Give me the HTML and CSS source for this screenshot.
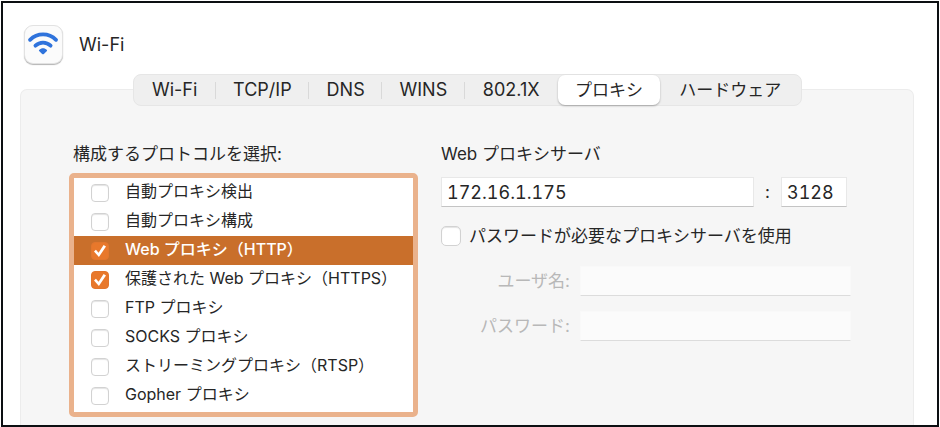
FILE: index.html
```html
<!DOCTYPE html>
<html lang="ja">
<head>
<meta charset="utf-8">
<meta name="viewport" content="width=device-width, initial-scale=1">
<title>Wi-Fi</title>
<link rel="stylesheet" href="styles.css">
</head>
<body>
<main class="window">
  <header class="header">
    <span class="app-icon">
      <svg viewBox="0 0 39 39" aria-hidden="true">
        <path class="arc" d="M5.3 14.6C13 7 25 7 32.7 14.6"/>
        <path class="arc" d="M11 20.7C15.6 16.4 22.4 16.4 27 20.7"/>
        <path class="dot" d="M14.9 25.2C17.3 22.9 20.7 22.9 23.1 25.2Q23.6 25.8 23.1 26.4L19.9 29.5Q19 30.3 18.1 29.5L14.9 26.4Q14.4 25.8 14.9 25.2Z"/>
      </svg>
    </span>
    <h1 class="title">Wi-Fi</h1>
  </header>

  <section class="panel">
    <nav class="tabs">
      <button class="tab tab-m" type="button">Wi-Fi</button>
      <button class="tab tab-l" type="button">TCP/IP</button>
      <button class="tab tab-s" type="button">DNS</button>
      <button class="tab tab-m" type="button">WINS</button>
      <button class="tab tab-l tab-last" type="button">802.1X</button>
      <button class="tab tab-xl tab-selected" type="button">プロキシ</button>
      <button class="tab tab-xxl tab-last" type="button">ハードウェア</button>
    </nav>

    <div class="columns">
      <div class="protocols">
        <h2 class="heading heading-inset">構成するプロトコルを選択:</h2>
        <ul class="list">
          <li><label class="row"><input class="check" type="checkbox"><span>自動プロキシ検出</span></label></li>
          <li><label class="row"><input class="check" type="checkbox"><span>自動プロキシ構成</span></label></li>
          <li><label class="row row-selected"><input class="check" type="checkbox" checked><span>Web プロキシ（HTTP）</span></label></li>
          <li><label class="row"><input class="check" type="checkbox" checked><span>保護された Web プロキシ（HTTPS）</span></label></li>
          <li><label class="row"><input class="check" type="checkbox"><span>FTP プロキシ</span></label></li>
          <li><label class="row"><input class="check" type="checkbox"><span>SOCKS プロキシ</span></label></li>
          <li><label class="row"><input class="check" type="checkbox"><span>ストリーミングプロキシ（RTSP）</span></label></li>
          <li><label class="row"><input class="check" type="checkbox"><span>Gopher プロキシ</span></label></li>
        </ul>
      </div>

      <form class="server">
        <h2 class="heading"><label for="host">Web プロキシサーバ</label></h2>
        <div class="address">
          <input class="field host" id="host" type="text" value="172.16.1.175">
          <label class="colon" for="port">:</label>
          <input class="field port" id="port" type="text" value="3128">
        </div>
        <label class="auth"><input class="check check-large" type="checkbox"><span>パスワードが必要なプロキシサーバを使用</span></label>
        <div class="credentials">
          <label for="user">ユーザ名:</label>
          <input class="field" id="user" type="text" disabled>
          <label for="password">パスワード:</label>
          <input class="field" id="password" type="password" disabled>
        </div>
      </form>
    </div>
  </section>
</main>
</body>
</html>
```

FILE: styles.css
```css
* {
  box-sizing: border-box;
}

body {
  margin: 0;
  padding: 1px;
  background: #fff;
  color: #262626;
  font-family: Inter, "Noto Sans CJK JP", sans-serif;
  font-size: 17px;
  line-height: 24px;
}

button,
input {
  margin: 0;
  color: inherit;
  font: inherit;
}

.window {
  display: flex;
  flex-direction: column;
  min-height: calc(100vh - 2px);
  padding: 22px 23px 0 17px;
  border: 2px solid #0c0f12;
}

.header {
  display: flex;
  align-items: center;
  gap: 16px;
  padding-left: 4px;
}

.app-icon {
  width: 39px;
  height: 39px;
  border: 1px solid #e2e2e2;
  border-radius: 9px;
  background: #fbfbfb;
  box-shadow: 0 1px 1px #b4b4b4;
}

.app-icon svg {
  display: block;
}

.arc {
  fill: none;
  stroke: #2f73dc;
  stroke-width: 4;
  stroke-linecap: round;
}

.dot {
  fill: #2f73dc;
}

.title,
.heading {
  margin: 0;
  font-size: 17px;
  font-weight: 400;
}

.title {
  font-size: 18px;
}

.panel {
  flex: 1;
  margin-top: 25px;
  border: 1px solid #ececec;
  border-bottom: 0;
  border-radius: 7px 7px 0 0;
  background: #f6f6f6;
}

.tabs {
  display: flex;
  width: 75%;
  height: 32px;
  margin: -16px auto 0;
  border: 1px solid #e6e6e6;
  border-radius: 8px;
  background: #efefef;
}

.tab {
  display: flex;
  align-items: center;
  justify-content: center;
  padding: 0;
  border: 0;
  background: none;
  font-size: 18px;
  white-space: nowrap;
}

.tab::after {
  flex: none;
  width: 1px;
  height: 17px;
  margin-left: auto;
  background: #d9d9d9;
  content: "";
}

.tab::before {
  width: 1px;
  margin-right: auto;
  content: "";
}

.tab-last::after,
.tab-selected::after {
  background: none;
}

.tab-s { flex: 73 1 0; }
.tab-m { flex: 82 1 0; }
.tab-l { flex: 93 1 0; }
.tab-xl { flex: 102 1 0; }
.tab-xxl { flex: 140 1 0; }

.tab-xl,
.tab-xxl {
  font-size: 17px;
}

.tab-selected {
  border-radius: 7px;
  background: #fff;
  box-shadow: 0 1px 2px rgb(0 0 0 / 30%);
}

.columns {
  display: grid;
  grid-template-columns: 349px minmax(0, 410px);
  gap: 23px;
  padding: 36px 48px 8px;
}

.heading-inset {
  padding-left: 4px;
}

.list {
  margin: 7px 0 0;
  padding: 0 0 2px;
  border: 5px solid #eab28c;
  border-radius: 5px;
  background: #fff;
  font-size: 16px;
  list-style: none;
}

.row {
  display: flex;
  gap: 16px;
  height: 29px;
  padding-left: 17px;
  line-height: 26px;
  white-space: nowrap;
}

.row-selected {
  background: #c96f2b;
  color: #fff;
  font-weight: 500;
}

.check {
  flex: none;
  width: 18px;
  height: 18px;
  margin-top: 6px;
  border: 1px solid #d2d2d2;
  border-radius: 4px;
  background: #fff;
  box-shadow: inset 0 1px 1px #e4e4e4;
  appearance: none;
}

.check:checked {
  display: grid;
  place-items: center;
  border-color: #e2762d;
  background: #e8782b;
  box-shadow: none;
}

.check:checked::before {
  width: 12px;
  height: 12px;
  background: #fff;
  clip-path: polygon(0 54%, 16% 40%, 38% 64%, 80% 0, 100% 13%, 41% 100%);
  content: "";
}

.check-large {
  width: 20px;
  height: 20px;
  margin: 0;
  border-radius: 5px;
}

.address {
  display: flex;
  align-items: center;
  margin-top: 11px;
}

.field {
  min-width: 0;
  height: 30px;
  padding: 0 5px;
  border: 1px solid #e8e8e8;
  border-bottom-color: #c4c4c4;
  border-radius: 0;
  background: #fff;
}

.field:disabled {
  border-color: #f9f9f9;
  border-bottom-color: #dcdcdc;
  background: #fbfbfb;
}

.host,
.port {
  font-size: 18px;
  font-variant-numeric: tabular-nums;
}

.host {
  flex: 0 1 313px;
}

.colon {
  flex: none;
  width: 27px;
  text-align: center;
}

.port {
  flex: none;
  width: 66px;
}

.auth {
  display: flex;
  align-items: center;
  gap: 8px;
  margin-top: 17px;
  white-space: nowrap;
}

.credentials {
  display: grid;
  grid-template-columns: 129px minmax(0, 1fr);
  align-items: center;
  gap: 15px 10px;
  margin-top: 18px;
  color: #b8b8b8;
  text-align: right;
}
```
